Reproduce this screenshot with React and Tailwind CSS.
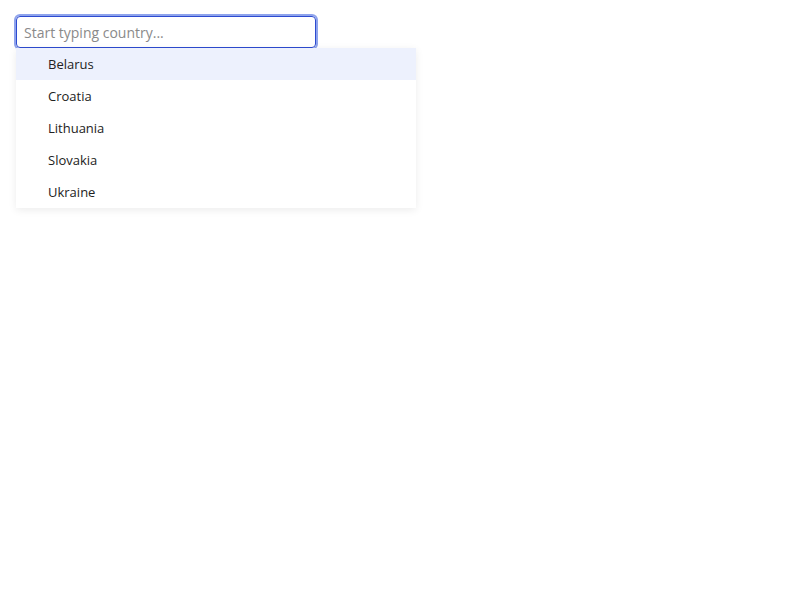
export default function App() {
  const items = ["Belarus", "Croatia", "Lithuania", "Slovakia", "Ukraine"];
  return (
    <div className="min-h-[600px] bg-white p-4" style={{ fontFamily: '"Open Sans", sans-serif' }}>
      <div className="w-[400px]">
        <div className="w-[300px] h-[32px] rounded-[4px] border border-[#2d4bd0] ring-2 ring-[#8ea3ec] flex items-center pl-[7px] pr-2">
          <span className="text-[14px] text-[#8a8a8a]">Start typing country...</span>
        </div>
        <div className="bg-white shadow-[0_2px_8px_rgba(0,0,0,0.08)]">
          {items.map((c, i) => (
            <div
              key={c}
              className={
                i === 0
                  ? "h-[32px] flex items-center pl-8 pt-[2px] text-[13px] text-[#222] bg-[#edf1fd]"
                  : "h-[32px] flex items-center pl-8 pt-[2px] text-[13px] text-[#222]"
              }
            >
              {c}
            </div>
          ))}
        </div>
      </div>
    </div>
  );
}
